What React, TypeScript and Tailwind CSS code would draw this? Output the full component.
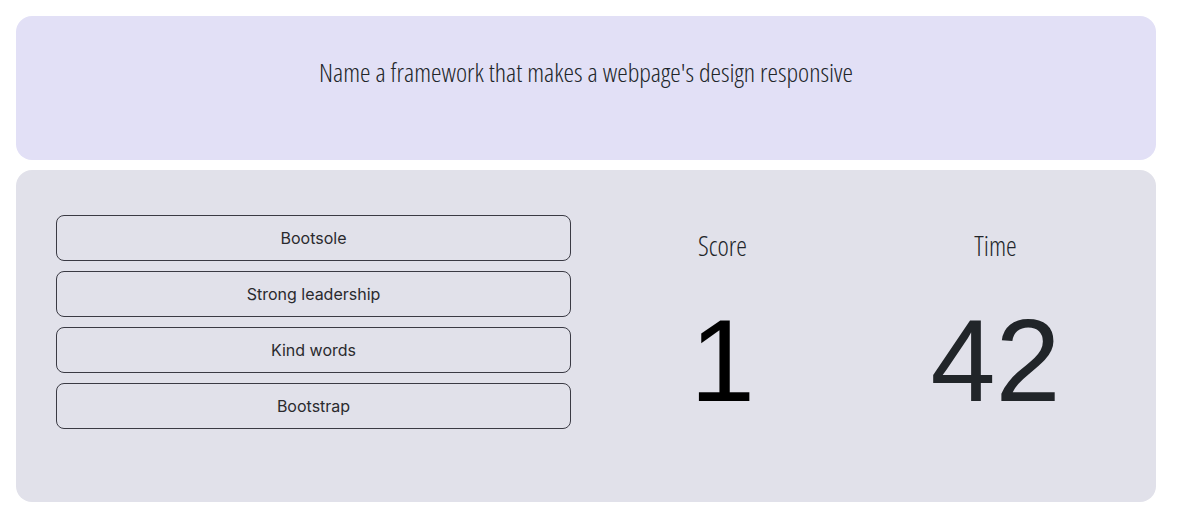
export default function App() {
  const answers = ["Bootsole", "Strong leadership", "Kind words", "Bootstrap"];
  return (
    <div className="w-[1181px] h-[517px] bg-white pl-4 pr-[25px] pt-4 flex flex-col gap-[10px]">
      <div className="h-[144px] rounded-[16px] bg-[#e2e0f6] flex justify-center pt-[37px]">
        <p
          className="text-[26.5px] leading-[38px] text-[#212529] font-light"
          style={{ fontFamily: '"Open Sans", sans-serif', fontStretch: "75%" }}
        >
          Name a framework that makes a webpage's design responsive
        </p>
      </div>
      <div className="h-[332px] rounded-[16px] bg-[#e1e1ea] flex pl-[40px] pt-[45px]">
        <div className="w-[515px] flex flex-col gap-[10px]">
          {answers.map((a) => (
            <button
              key={a}
              className="h-[46px] w-full rounded-[8px] border border-[#3a3a44] text-[16px] text-[#2a2a2e]"
              style={{ fontFamily: "Inter, sans-serif" }}
            >
              {a}
            </button>
          ))}
        </div>
        <div className="w-[15px]" />
        <div className="w-[273px] flex flex-col items-center">
          <div
            className="mt-[13px] text-[27px] leading-[36px] font-light text-[#212529]"
            style={{ fontFamily: '"Open Sans", sans-serif', fontStretch: "75%" }}
          >
            Score
          </div>
          <div
            className="mt-[37px] text-[117px] leading-[120px] text-black"
            style={{ fontFamily: '"Liberation Sans", Arial, sans-serif' }}
          >
            1
          </div>
        </div>
        <div className="w-[273px] flex flex-col items-center">
          <div
            className="mt-[13px] text-[27px] leading-[36px] font-light text-[#212529]"
            style={{ fontFamily: '"Open Sans", sans-serif', fontStretch: "75%" }}
          >
            Time
          </div>
          <div
            className="mt-[37px] text-[117px] leading-[120px] text-[#212529]"
            style={{ fontFamily: '"Liberation Sans", Arial, sans-serif' }}
          >
            42
          </div>
        </div>
      </div>
    </div>
  );
}
